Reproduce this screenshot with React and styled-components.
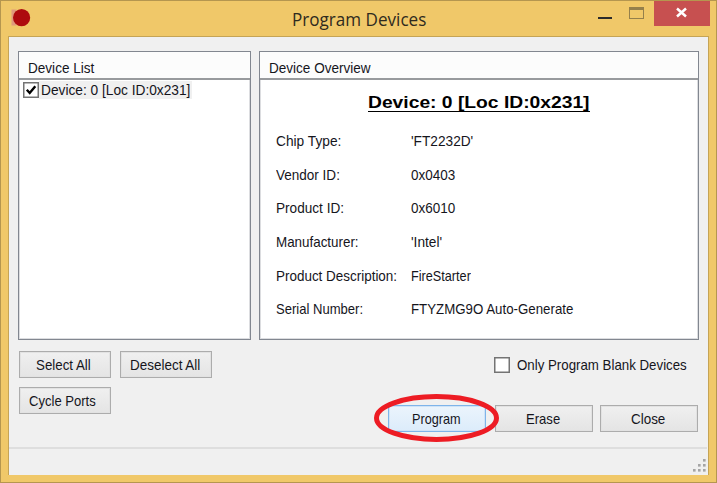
import React, { useLayoutEffect, useRef, useState } from "react";
import styled, { createGlobalStyle } from "styled-components";

const Global = createGlobalStyle`
  * { box-sizing: border-box; }
  body { margin: 0; overflow: hidden; }
`;

const Frame = styled.div`
  width: 717px;
  height: 483px;
  display: flex;
  flex-direction: column;
  padding: 0 7px 7px;
  background: #f0c869;
  border: 1px solid #b5964f;
  font-family: "Liberation Sans", Arial, sans-serif;
  font-size: 15px;
  color: #15151c;
`;

const TitleBar = styled.header`
  height: 35px;
  flex: none;
  display: grid;
  grid-template-columns: 284px 1fr 139px;
`;

const AppIcon = styled.svg`
  display: block;
  width: 22px;
  height: 20px;
  margin: 7px 0 0 2px;
`;

const Title = styled.h1`
  margin: 0;
  padding-top: 6px;
  font: 400 17.6px/25px "Open Sans", "Noto Sans", sans-serif;
  color: #2f2a1e;
`;

const WindowControls = styled.div`
  display: flex;
  justify-content: flex-end;
`;

const ControlGlyphs = styled.svg`
  display: block;
  width: 62px;
  height: 24px;
`;

const CloseControl = styled.button`
  width: 56px;
  height: 25px;
  margin-right: -1px;
  padding: 0;
  border: 0;
  background: #c75050;
  svg { display: block; }
`;

const Client = styled.main`
  flex: 1;
  display: flex;
  flex-direction: column;
  border: 1px solid #c5a456;
  border-bottom: 0;
  background: #f0f0f0;
`;

const Panels = styled.div`
  display: grid;
  grid-template-columns: 233px 440px;
  column-gap: 8px;
  height: 303px;
  padding: 14px 9px 0;
`;

const Panel = styled.section`
  height: 289px;
  background: #fff;
  border: 1px solid #828790;
  box-shadow: inset 0 0 0 1px #dcdde0;
`;

const PanelHeader = styled.div`
  height: 28px;
  padding: 7px 0 0 9px;
  line-height: 18px;
  background: #fcfcfc;
  border-bottom: 2px solid #989a9d;
`;

const DeviceRow = styled.label`
  display: flex;
  align-items: center;
  height: 19px;
  padding-left: 4px;
`;

const DeviceName = styled.span`
  height: 18px;
  width: 153px;
  padding-left: 2px;
  line-height: 18px;
  background: #f0f0f0;
`;

const Box = styled.svg`
  display: block;
  flex: none;
  width: 16px;
  height: 16px;
`;

const OverviewTitle = styled.h2`
  margin: 13px 0 20px 108px;
  width: 222px;
  height: 19px;
  font-size: 17px;
  line-height: 20px;
  color: #000;
  border-bottom: 1px solid #000;
`;

const Details = styled.dl`
  display: grid;
  grid-template-columns: 135px 1fr;
  grid-auto-rows: 33.7px;
  margin: 0;
  padding-left: 16px;
  line-height: 18px;
  dt, dd { margin: 0; }
`;

const Footer = styled.div`
  display: flex;
  justify-content: space-between;
  height: 107px;
  padding: 11px 10px 0 10px;
`;

const LeftActions = styled.div`
  display: grid;
  grid-template-columns: 92px 92px;
  grid-auto-rows: 27px;
  gap: 9px;
  align-content: start;
`;

const RightActions = styled.div`
  display: flex;
  flex-direction: column;
  gap: 32px;
  padding-top: 5px;
`;

const BlankOption = styled.label`
  display: flex;
  align-items: center;
  gap: 7px;
  height: 17px;
  margin-left: 106px;
  line-height: 18px;
`;

const ButtonRow = styled.div`
  display: grid;
  grid-template-columns: 107px 105px 98px;
  height: 27px;
`;

const Button = styled.button`
  display: flex;
  justify-content: center;
  align-items: center;
  padding: 0 ${(p) => p.$nudge || 1}px 0 0;
  width: ${(p) => p.$width || 98}px;
  font: inherit;
  line-height: 18px;
  color: inherit;
  border: 1px solid ${(p) => (p.$active ? "#7eb4ea" : "#acacac")};
  box-shadow: inset 0 0 0 1px ${(p) => (p.$active ? "#cfe3f7" : "#e2e2e2")};
  background: ${(p) =>
    p.$active
      ? "linear-gradient(#ebf4fc, #dcecfb)"
      : "linear-gradient(#f0f0f0, #e4e4e4)"};
`;

const ProgramSlot = styled.div`
  position: relative;
  display: grid;
`;

const Highlight = styled.svg`
  position: absolute;
  left: -14px;
  top: -11px;
  width: 125px;
  height: 48px;
  pointer-events: none;
`;

const StatusBar = styled.div`
  flex: 1;
  display: flex;
  justify-content: flex-end;
  align-items: flex-end;
  margin-right: 1px;
  padding: 0 0 1px;
  border-top: 2px solid #dedede;
`;

const FitBox = styled.span`
  display: inline-block;
  flex: none;
  width: ${(p) => p.$width}px;
  height: 1.2em;
  line-height: inherit;
  white-space: nowrap;
  vertical-align: top;
`;

const FitText = styled.span`
  display: inline-block;
  transform-origin: 0 50%;
`;

/* Condenses a caption horizontally so it occupies exactly `width` pixels. */
function Fit({ width, children }) {
  const ref = useRef(null);
  const [scale, setScale] = useState(1);
  useLayoutEffect(() => {
    setScale(width / ref.current.offsetWidth);
  }, [width, children]);
  return (
    <FitBox $width={width}>
      <FitText ref={ref} style={{ transform: `scaleX(${scale})` }}>
        {children}
      </FitText>
    </FitBox>
  );
}

function Checkbox({ checked }) {
  return (
    <Box viewBox="0 0 16 16">
      <rect x="0.75" y="0.75" width="14.5" height="14.5" fill="#fff" stroke="#747474" strokeWidth="1.5" />
      {checked && <path d="M3.8 7.8 6.7 11 12.3 4.2" fill="none" stroke="#000" strokeWidth="2.4" />}
    </Box>
  );
}

const details = [
  ["Chip Type:", 65, "'FT2232D'", 62],
  ["Vendor ID:", 64, "0x0403", 44],
  ["Product ID:", 68, "0x6010", 44],
  ["Manufacturer:", 83, "'Intel'", 31],
  ["Product Description:", 121, "FireStarter", 60],
  ["Serial Number:", 87, "FTYZMG9O Auto-Generate", 162],
];

const gripDots = [[10, 0], [5, 5], [10, 5], [0, 10], [5, 10], [10, 10]];

export default function App() {
  return (
    <>
      <Global />
      <Frame>
        <TitleBar>
          <AppIcon viewBox="0 0 22 20">
            <path d="M1.5 1.5h5v16h-5z" fill="#e09a7c" />
            <circle cx="11.6" cy="9.7" r="8.6" fill="#ad0b0e" />
          </AppIcon>
          <Title><Fit width={134}>Program Devices</Fit></Title>
          <WindowControls>
            <ControlGlyphs viewBox="0 0 62 24">
              <path d="M6 16h14v2H6z" fill="#2b2b2b" />
              <path d="M37 6h15v12H37zM38 9v8h13V9z" fill="#95804b" fillRule="evenodd" />
            </ControlGlyphs>
            <CloseControl aria-label="Close window">
              <svg width="56" height="25" viewBox="0 0 56 25">
                <path d="M23 7.5l9 8M32 7.5l-9 8" stroke="#fff" strokeWidth="2.5" />
              </svg>
            </CloseControl>
          </WindowControls>
        </TitleBar>
        <Client>
          <Panels>
            <Panel>
              <PanelHeader><Fit width={66}>Device List</Fit></PanelHeader>
              <DeviceRow>
                <Checkbox checked />
                <DeviceName><Fit width={149}>Device: 0 [Loc ID:0x231]</Fit></DeviceName>
              </DeviceRow>
            </Panel>
            <Panel>
              <PanelHeader><Fit width={102}>Device Overview</Fit></PanelHeader>
              <OverviewTitle><Fit width={222}>Device: 0 [Loc ID:0x231]</Fit></OverviewTitle>
              <Details>
                {details.map(([name, nameWidth, value, valueWidth]) => (
                  <React.Fragment key={name}>
                    <dt><Fit width={nameWidth}>{name}</Fit></dt>
                    <dd><Fit width={valueWidth}>{value}</Fit></dd>
                  </React.Fragment>
                ))}
              </Details>
            </Panel>
          </Panels>
          <Footer>
            <LeftActions>
              <Button $width={92} $nudge={3}><Fit width={55}>Select All</Fit></Button>
              <Button $width={92} $nudge={2}><Fit width={70}>Deselect All</Fit></Button>
              <Button $width={92} $nudge={5}><Fit width={67}>Cycle Ports</Fit></Button>
            </LeftActions>
            <RightActions>
              <BlankOption>
                <Checkbox />
                <Fit width={170}>Only Program Blank Devices</Fit>
              </BlankOption>
              <ButtonRow>
                <ProgramSlot>
                  <Button $active $nudge={2}><Fit width={49}>Program</Fit></Button>
                  <Highlight viewBox="0 0 125 48">
                    <ellipse cx="62.5" cy="24" rx="60" ry="21.5" fill="none" stroke="#ed1c24" strokeWidth="5" />
                  </Highlight>
                </ProgramSlot>
                <Button $nudge={2}><Fit width={34}>Erase</Fit></Button>
                <Button $nudge={3}><Fit width={34}>Close</Fit></Button>
              </ButtonRow>
            </RightActions>
          </Footer>
          <StatusBar>
            <svg width="15" height="16" viewBox="0 0 15 16">
              {gripDots.map(([x, y]) => (
                <rect key={`${x}-${y}`} x={x + 1} y={y + 1} width="2.6" height="2.6" fill="#a5a5a5" />
              ))}
            </svg>
          </StatusBar>
        </Client>
      </Frame>
    </>
  );
}
